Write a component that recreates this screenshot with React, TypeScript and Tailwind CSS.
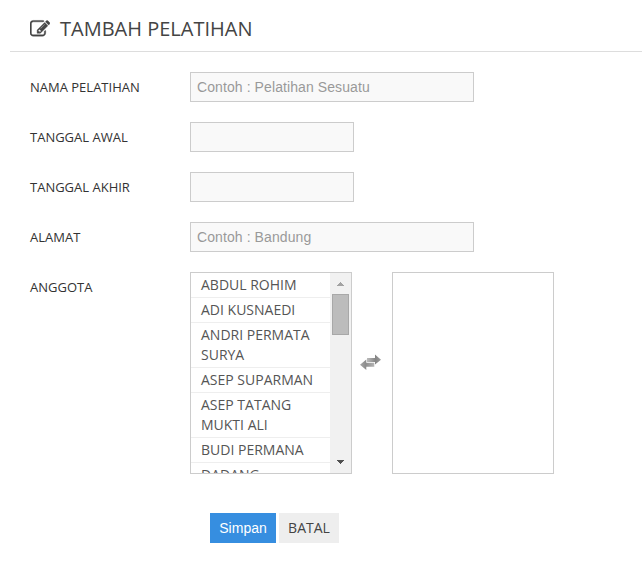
import React from "react";

const members = [
  "ABDUL ROHIM",
  "ADI KUSNAEDI",
  "ANDRI PERMATA SURYA",
  "ASEP SUPARMAN",
  "ASEP TATANG MUKTI ALI",
  "BUDI PERMANA",
  "DADANG",
];

function EditIcon() {
  return (
    <svg viewBox="0 0 1792 1792" className="h-5 w-5 shrink-0" fill="#444" stroke="#444" strokeWidth="36">
      <path d="M888 1184l116-116-152-152-116 116v56h96v96h56zm440-720q-16-16-33 1l-350 350q-17 17-1 33t33-1l350-350q17-17 1-33zm80 594v190q0 119-84.500 203.500t-203.500 84.500h-832q-119 0-203.500-84.500t-84.500-203.500v-832q0-119 84.500-203.500t203.500-84.500h832q63 0 117 25 15 7 18 23 3 17-9 29l-49 49q-14 14-32 8-23-6-45-6h-832q-66 0-113 47t-47 113v832q0 66 47 113t113 47h832q66 0 113-47t47-113v-126q0-13 9-22l64-64q15-15 35-7t20 29zm-96-738l288 288-672 672h-288v-288zm444 132l-92 92-288-288 92-92q28-28 68-28t68 28l152 152q28 28 28 68t-28 68z" />
    </svg>
  );
}

function SwapIcon() {
  return (
    <svg viewBox="0 0 22 16" className="h-4 w-[22px]">
      <defs>
        <linearGradient id="right" x1="0" x2="1" y1="0" y2="0">
          <stop offset="0" stopColor="#bcbcbc" />
          <stop offset="0.6" stopColor="#858585" />
          <stop offset="1" stopColor="#9c9c9c" />
        </linearGradient>
        <linearGradient id="left" x1="0" x2="1" y1="0" y2="0">
          <stop offset="0" stopColor="#a8a8a8" />
          <stop offset="0.4" stopColor="#8c8c8c" />
          <stop offset="1" stopColor="#b4b4b4" />
        </linearGradient>
      </defs>
      <path d="M7 4h8V0.500L21 5.700 15 10.500V8H7z" fill="url(#right)" />
      <path d="M14.300 8.800H6.300V5.500L0 10.800l6.300 5.100V12.800h8z" fill="url(#left)" />
    </svg>
  );
}

function Row({ label, children }: { label: string; children: React.ReactNode }) {
  return (
    <div className="mb-5 flex items-start">
      <label className="w-40 shrink-0 pt-[5px] text-[13px] leading-5 text-[#333]">{label}</label>
      {children}
    </div>
  );
}

function Field({ wide, placeholder }: { wide?: boolean; placeholder?: string }) {
  return (
    <input
      type="text"
      placeholder={placeholder}
      className={`${wide ? "w-[284px]" : "w-[164px]"} h-[30px] border border-[#ccc] bg-[#f9f9f9] px-1.5 font-['Liberation_Sans',Arial,sans-serif] text-sm leading-5 tracking-[0.09px] text-[#555] outline-none placeholder:text-[#999]`}
    />
  );
}

export default function App() {
  return (
    <div className="h-[573px] overflow-hidden bg-white font-['Open_Sans',sans-serif]">
      <header className="ml-2.5 flex h-[52px] items-center border-b border-[#ddd] pl-5 pt-1.5">
        <EditIcon />
        <h1 className="ml-2.5 text-[20px] leading-[30px] text-[#444]">TAMBAH PELATIHAN</h1>
      </header>
      <form className="pl-[30px] pt-5">
        <Row label="NAMA PELATIHAN"><Field wide placeholder="Contoh : Pelatihan Sesuatu" /></Row>
        <Row label="TANGGAL AWAL"><Field /></Row>
        <Row label="TANGGAL AKHIR"><Field /></Row>
        <Row label="ALAMAT"><Field wide placeholder="Contoh : Bandung" /></Row>
        <Row label="ANGGOTA">
          <div className="flex h-[202px] w-[162px] overflow-hidden border border-[#ccc]">
            <ul className="w-[139px] shrink-0">
              {members.map((name) => (
                <li key={name} className="border-b border-[#eee] py-0.5 pl-2.5 pr-2.5 text-sm leading-5 text-[#555]">{name}</li>
              ))}
            </ul>
            <div className="flex flex-1 flex-col items-center bg-[#f1f1f1]">
              <svg viewBox="0 0 7 4" className="mt-[9px] h-1 w-[7px] shrink-0" fill="#a3a3a3" shapeRendering="crispEdges">
                <path d="M3 0h1v1h1v1h1v1h1v1H0V3h1V2h1V1h1z" />
              </svg>
              <div className="mt-2 h-[41px] w-[17px] shrink-0 border border-[#a8a8a8] bg-[#bcbcbc]" />
              <svg viewBox="0 0 7 4" className="mb-[9px] mt-auto h-1 w-[7px] shrink-0" fill="#505050" shapeRendering="crispEdges">
                <path d="M0 0h7v1H6v1H5v1H4v1H3V3H2V2H1V1H0z" />
              </svg>
            </div>
          </div>
          <div className="flex h-[202px] w-10 pl-2 pt-[82px]"><SwapIcon /></div>
          <div className="h-[202px] w-[162px] border border-[#ccc]" />
        </Row>
        <div className="ml-[180px] mt-[39px] flex gap-[3px]">
          <button type="button" className="h-[30px] w-[66px] bg-[#368ee0] font-['Liberation_Sans',Arial,sans-serif] text-sm text-white">Simpan</button>
          <button type="button" className="h-[30px] w-[60px] bg-[#eee] text-sm leading-5 text-[#444]">BATAL</button>
        </div>
      </form>
    </div>
  );
}
